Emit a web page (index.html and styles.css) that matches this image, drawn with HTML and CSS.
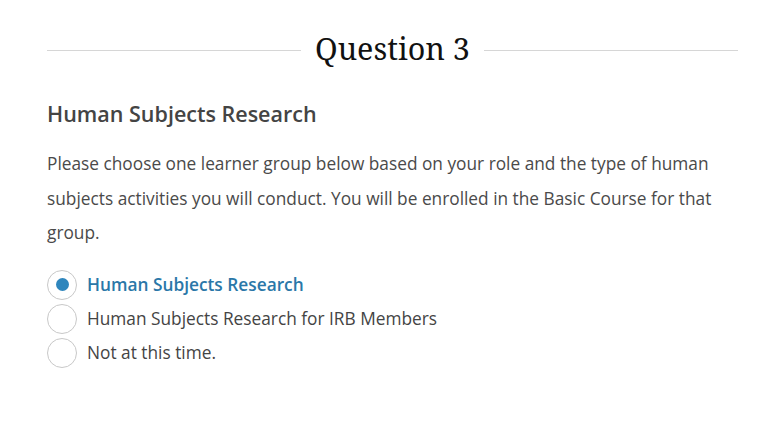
FILE: index.html
```html
<!DOCTYPE html>
<html lang="en">

<head>
    <meta charset="UTF-8">
    <meta name="viewport" content="width=device-width, initial-scale=1.0">
    <title>Question 3</title>
    <link rel="stylesheet" href="styles.css">
</head>

<body>

    <div class="container">
        <h1 class="question-title"><span>Question 3</span></h1>

        <h2>Human Subjects Research</h2>
        <p class="intro">Please choose one learner group below based on your role and the type of human subjects activities you will conduct. You will be enrolled in the Basic Course for that group.</p>

        <form class="choices">
            <label class="choice selected">
                <input type="radio" name="group" checked>
                <span class="dot"></span>
                Human Subjects Research
            </label>
            <label class="choice">
                <input type="radio" name="group">
                <span class="dot"></span>
                Human Subjects Research for IRB Members
            </label>
            <label class="choice">
                <input type="radio" name="group">
                <span class="dot"></span>
                Not at this time.
            </label>
        </form>
    </div>

</body>

</html>
```

FILE: styles.css
```css
* {
    padding: 0;
    margin: 0;
    box-sizing: border-box;
}

body {
    background-color: #fff;
    font-family: "Open Sans", "Liberation Sans", sans-serif;
    color: #444;
}

.container {
    padding: 26px 40px 0 47px;
}

.question-title {
    display: flex;
    align-items: center;
    gap: 14px;
    font-family: "Noto Serif", "DejaVu Serif", "Liberation Serif", serif;
    font-weight: 400;
    font-size: 30.5px;
    line-height: 44px;
    color: #111;
}

.question-title::before,
.question-title::after {
    content: "";
    flex: 1;
    height: 1px;
    margin-top: 4px;
    background-color: #d6d6d6;
}

h2 {
    margin-top: 29px;
    font-size: 21.5px;
    font-weight: 600;
    line-height: 30px;
    color: #444;
}

.intro {
    margin-top: 18px;
    font-size: 17.3px;
    line-height: 34.5px;
    color: #4a4a4a;
    max-width: 690px;
}

.choices {
    margin-top: 19px;
    display: flex;
    flex-direction: column;
    gap: 4px;
}

.choice {
    display: flex;
    align-items: center;
    gap: 10px;
    font-size: 17.3px;
    line-height: 30px;
    color: #444;
    cursor: pointer;
}

.choice input {
    display: none;
}

.dot {
    width: 30px;
    height: 30px;
    border: 1px solid #c8c8c8;
    border-radius: 50%;
    display: flex;
    align-items: center;
    justify-content: center;
    background-color: #fff;
}

.choice.selected {
    color: #2a77a8;
    font-weight: 600;
}

.choice.selected .dot::after {
    content: "";
    width: 13px;
    height: 13px;
    border-radius: 50%;
    background-color: #2f86bd;
}
```
